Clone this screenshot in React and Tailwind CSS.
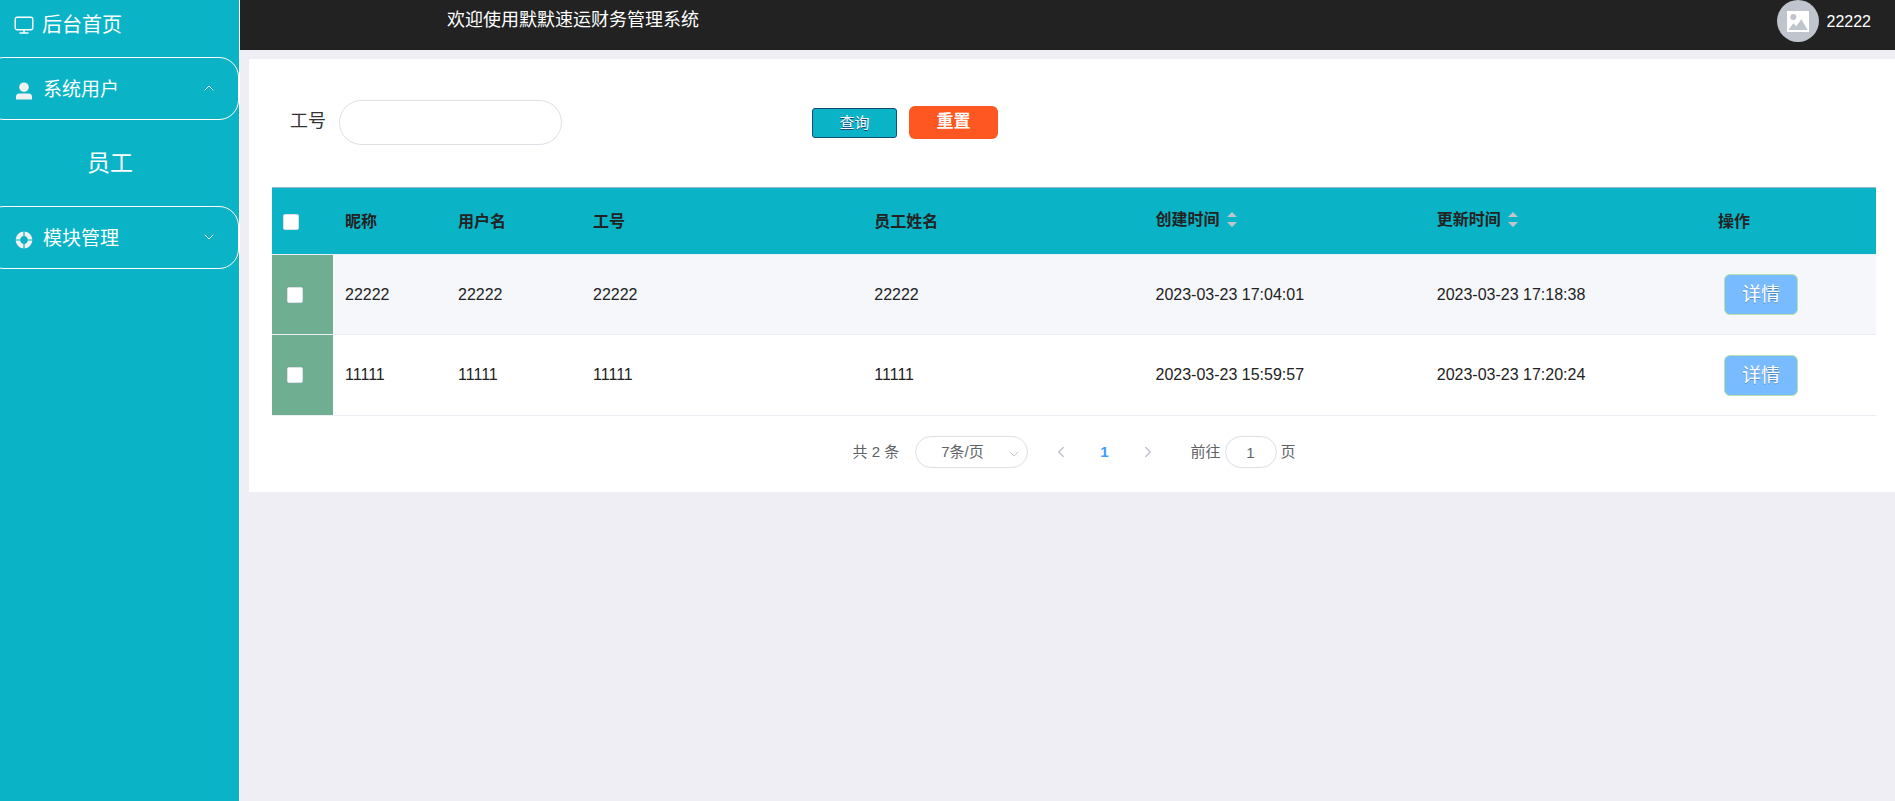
import { useState } from "react";
import { ChevronDown, ChevronLeft, ChevronRight, ChevronUp } from "lucide-react";

const employees = [
  {
    id: 1,
    nickname: "22222",
    username: "22222",
    jobNo: "22222",
    name: "22222",
    createdAt: "2023-03-23 17:04:01",
    updatedAt: "2023-03-23 17:18:38",
  },
  {
    id: 2,
    nickname: "11111",
    username: "11111",
    jobNo: "11111",
    name: "11111",
    createdAt: "2023-03-23 15:59:57",
    updatedAt: "2023-03-23 17:20:24",
  },
];

const columns = [
  { key: "nickname", label: "昵称" },
  { key: "username", label: "用户名" },
  { key: "jobNo", label: "工号" },
  { key: "name", label: "员工姓名" },
  { key: "createdAt", label: "创建时间", sortable: true },
  { key: "updatedAt", label: "更新时间", sortable: true },
];

const MonitorIcon = () => (
  <svg viewBox="0 0 20 18" className="h-[18px] w-5" fill="none" stroke="currentColor" strokeWidth="1.4" aria-hidden="true">
    <rect x="1.2" y="1.2" width="17.6" height="12.6" rx="2" />
    <path d="M10 14v2.8M5.5 17h9" />
  </svg>
);

const UserIcon = () => (
  <svg viewBox="0 0 18 18" className="h-[18px] w-[18px]" fill="currentColor" aria-hidden="true">
    <circle cx="9" cy="5.2" r="4.8" />
    <path d="M1 17.5v-2.6a3.4 3.4 0 0 1 3.4-3.4h9.2a3.4 3.4 0 0 1 3.4 3.4v2.6z" />
  </svg>
);

const HelpIcon = () => (
  <svg viewBox="0 0 18 18" className="h-[18px] w-[18px]" fill="currentColor" aria-hidden="true">
    <path d="M8.4.6v4.5a4 4 0 0 0-3.3 3.3H.6A8.5 8.5 0 0 1 8.4.6zM9.6.6v4.5a4 4 0 0 1 3.3 3.3h4.5A8.5 8.5 0 0 0 9.6.6zM8.4 17.4v-4.5a4 4 0 0 1-3.3-3.3H.6a8.5 8.5 0 0 0 7.8 7.8zM9.6 17.4v-4.5a4 4 0 0 0 3.3-3.3h4.5a8.5 8.5 0 0 1-7.8 7.8z" />
  </svg>
);

const PictureIcon = () => (
  <svg viewBox="0 0 22 21" className="h-[21px] w-[22px]" aria-hidden="true">
    <path fill="#fff" d="M0 0h22v21H0z" />
    <circle cx="6.3" cy="6" r="3" fill="#c0c4cc" />
    <path fill="#c0c4cc" d="M1.4 19l5-6.8 2.800 3 5.200-7L20.600 19z" />
  </svg>
);

const SortIcon = () => (
  <svg viewBox="0 0 10 16" className="h-4 w-[10px]" fill="#c0c4cc" aria-hidden="true">
    <path d="M5 0l5 5H0zM5 15l5-5H0z" />
  </svg>
);

const Checkbox = ({ label, ...props }) => (
  <input
    type="checkbox"
    aria-label={label}
    className="block size-4 appearance-none rounded-xs border border-[#dcdfe6] bg-white checked:bg-[#409eff]"
    {...props}
  />
);

const SubMenu = ({ icon, title, open, onToggle }) => {
  const Arrow = open ? ChevronUp : ChevronDown;

  return (
    <button
      type="button"
      onClick={onToggle}
      aria-expanded={open}
      className="-ml-4 flex h-[63px] items-center gap-[10px] rounded-[20px] border border-white pt-1 pr-[21px] pl-[30px] text-[19px] text-white"
    >
      <span className="text-[#f0f0f0]">{icon}</span>
      {title}
      <Arrow className="mb-1.5 ml-auto size-4" strokeWidth={1.5} aria-hidden="true" />
    </button>
  );
};

const Sidebar = () => {
  const [usersOpen, setUsersOpen] = useState(true);
  const [modulesOpen, setModulesOpen] = useState(false);

  return (
    <aside className="w-60 shrink-0 overflow-hidden border-r border-white bg-[#0ab4c6]">
      <nav className="flex flex-col">
        <a href="#home" className="flex h-[57px] items-center gap-2 pb-2 pl-[14px] text-[20px] text-white">
          <MonitorIcon />
          后台首页
        </a>
        <SubMenu
          icon={<UserIcon />}
          title="系统用户"
          open={usersOpen}
          onToggle={() => setUsersOpen(!usersOpen)}
        />
        {usersOpen && (
          <a href="#employees" className="flex h-[86px] items-center pl-[87px] text-[23px] text-white">
            员工
          </a>
        )}
        <SubMenu
          icon={<HelpIcon />}
          title="模块管理"
          open={modulesOpen}
          onToggle={() => setModulesOpen(!modulesOpen)}
        />
      </nav>
    </aside>
  );
};

const Header = () => (
  <header className="flex h-[50px] items-start justify-between bg-[#222] pr-6 pl-[207px] text-white">
    <h1 className="pt-1.5 text-[18px] leading-7">欢迎使用默默速运财务管理系统</h1>
    <div className="flex items-center gap-2 text-[16px]">
      <span className="flex size-[42px] items-center justify-center rounded-full bg-[#c0c4cc]">
        <PictureIcon />
      </span>
      <span className="pt-0.5">22222</span>
    </div>
  </header>
);

const SearchForm = () => (
  <form className="flex items-center pl-[18px]" onSubmit={(e) => e.preventDefault()}>
    <label htmlFor="jobNo" className="pb-0.5 text-[18px] text-[#333]">
      工号
    </label>
    <input
      id="jobNo"
      type="text"
      className="ml-[13px] h-[45px] w-[223px] rounded-full border border-[#dcdfe6] px-4 text-[16px] outline-none"
    />
    <button
      type="submit"
      className="ml-[250px] h-[30px] w-[85px] rounded-[3px] border border-[#124d77] bg-[#0ab4c6] text-[15px] leading-none text-white [text-shadow:0_1px_0_#154682]"
    >
      查询
    </button>
    <button
      type="reset"
      className="ml-3 h-[33px] w-[89px] rounded-md bg-[#ff5722] pb-0.5 text-[17px] leading-none font-bold text-white"
    >
      重置
    </button>
  </form>
);

const EmployeeTable = () => {
  const [selected, setSelected] = useState([]);

  const toggleRow = (id) => {
    setSelected((prev) => (prev.includes(id) ? prev.filter((x) => x !== id) : [...prev, id]));
  };

  const toggleAll = () => {
    setSelected(selected.length === employees.length ? [] : employees.map((e) => e.id));
  };

  return (
    <table className="w-full table-fixed border-separate border-spacing-0 text-left text-[16px] text-[#222]">
      <colgroup>
        <col className="w-[61px]" />
        <col className="w-[113px]" />
        <col className="w-[135px]" />
        <col />
        <col />
        <col />
        <col />
        <col className="w-[170px]" />
      </colgroup>
      <thead className="bg-[#0ab4c6]">
        <tr className="h-[68px]">
          <th className="border-t border-b border-t-[#9fb8cc] border-b-[#ebeef5] pt-0.5 pl-[11px]">
            <Checkbox
              label="全选"
              checked={selected.length === employees.length}
              onChange={toggleAll}
            />
          </th>
          {columns.map((col) => (
            <th
              key={col.key}
              className="border-t border-b border-t-[#9fb8cc] border-b-[#ebeef5] pt-0.5 pl-3 font-bold"
            >
              {col.sortable ? (
                <button type="button" className="flex items-center gap-[7px] pb-1">
                  {col.label}
                  <SortIcon />
                </button>
              ) : (
                col.label
              )}
            </th>
          ))}
          <th className="border-t border-b border-t-[#9fb8cc] border-b-[#ebeef5] pt-0.5 pl-3 font-bold">
            操作
          </th>
        </tr>
      </thead>
      <tbody>
        {employees.map((row) => (
          <tr key={row.id} className="h-[81px] odd:h-20 odd:bg-[#f5f7fa]">
            <td className="border-b border-[#ebeef5] bg-[#6fae90] pl-[15px]">
              <Checkbox
                label={`选择 ${row.nickname}`}
                checked={selected.includes(row.id)}
                onChange={() => toggleRow(row.id)}
              />
            </td>
            {columns.map((col) => (
              <td key={col.key} className="border-b border-[#ebeef5] pl-3 whitespace-nowrap">
                {row[col.key]}
              </td>
            ))}
            <td className="border-b border-[#ebeef5] pl-[18px]">
              <button
                type="button"
                className="block h-[41px] w-[74px] rounded-md border border-[#b8e2a8] bg-[#79bbff] pt-0.5 text-[19px] text-white [text-shadow:0_1px_0_#5b8fc4]"
              >
                详情
              </button>
            </td>
          </tr>
        ))}
      </tbody>
    </table>
  );
};

const Pagination = () => (
  <div className="mt-5 flex items-center justify-center text-[15px] text-[#606266]">
    <span>共 2 条</span>
    <div className="relative ml-4">
      <select
        aria-label="每页条数"
        defaultValue="7"
        className="block h-8 w-[113px] appearance-none rounded-full border border-[#dcdfe6] bg-white pl-[25px] outline-none"
      >
        <option value="7">7条/页</option>
        <option value="14">14条/页</option>
      </select>
      <ChevronDown
        className="pointer-events-none absolute top-[10px] right-[6px] size-4 text-[#c0c4cc]"
        strokeWidth={1.5}
        aria-hidden="true"
      />
    </div>
    <button type="button" aria-label="上一页" disabled className="ml-6 text-[#c0c4cc]">
      <ChevronLeft className="size-[18px]" strokeWidth={2} />
    </button>
    <button type="button" className="mx-[30px] font-bold text-[#409eff]">
      1
    </button>
    <button type="button" aria-label="下一页" disabled className="text-[#c0c4cc]">
      <ChevronRight className="size-[18px]" strokeWidth={2} />
    </button>
    <label htmlFor="page" className="ml-[34px]">
      前往
    </label>
    <input
      id="page"
      type="text"
      defaultValue="1"
      className="mx-1 h-8 w-[52px] rounded-full border border-[#dcdfe6] text-center outline-none"
    />
    <span>页</span>
  </div>
);

export default function App() {
  return (
    <div className="flex min-h-screen bg-[#efeef4] font-['Liberation_Sans','Noto_Sans_CJK_SC',sans-serif]">
      <Sidebar />
      <div className="min-w-0 flex-1">
        <Header />
        <main className="mt-[9px] ml-[9px] bg-white pt-[41px] pr-[19px] pb-6 pl-[23px]">
          <SearchForm />
          <div className="mt-[42px]">
            <EmployeeTable />
          </div>
          <Pagination />
        </main>
      </div>
    </div>
  );
}
